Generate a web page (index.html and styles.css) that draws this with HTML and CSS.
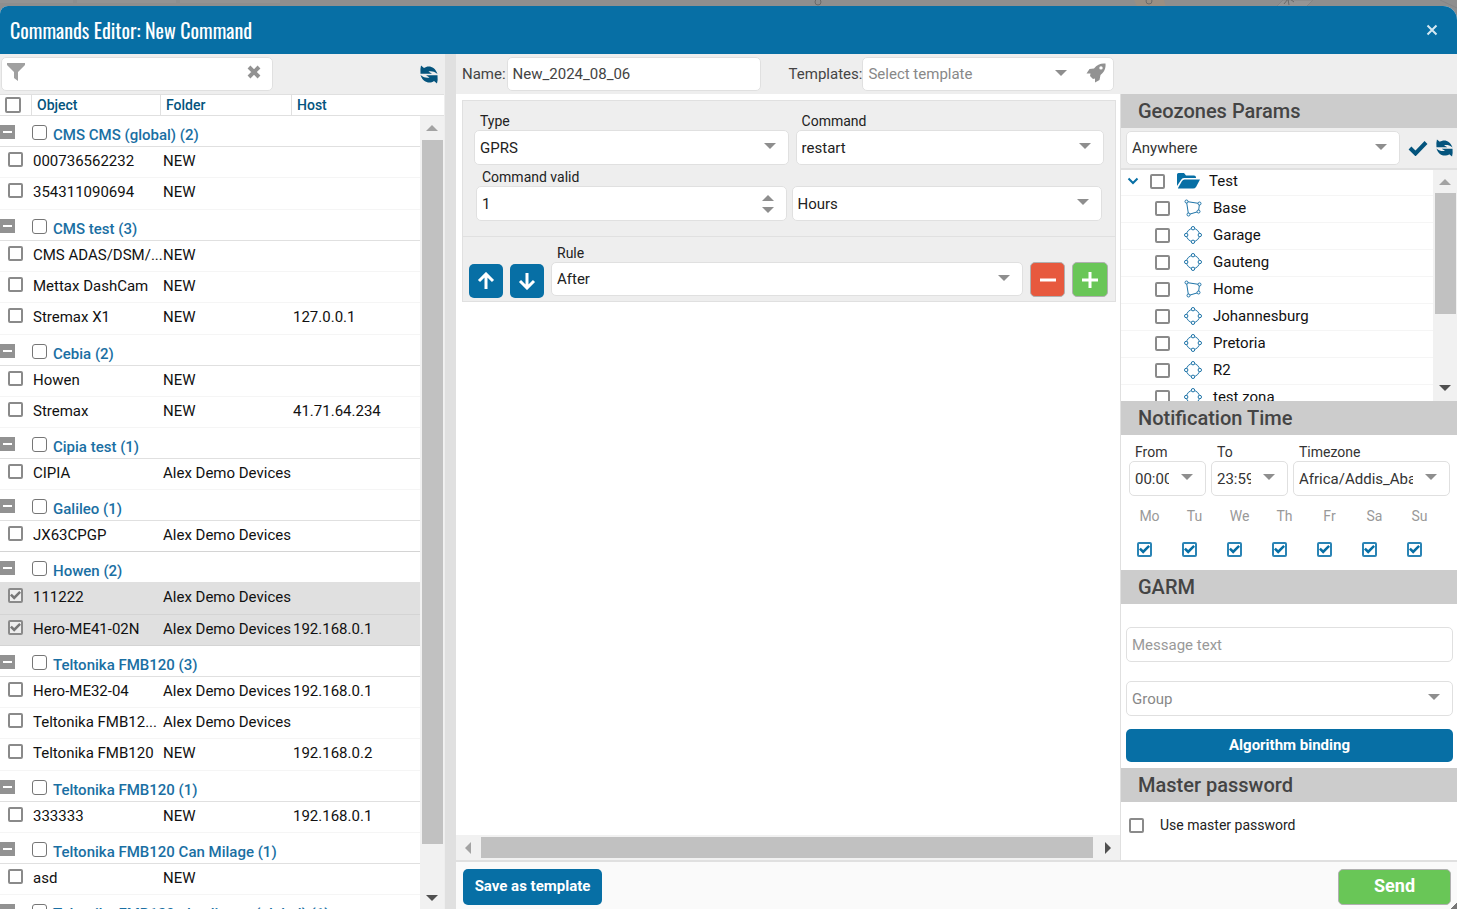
FILE: index.html
```html
<!DOCTYPE html>
<html lang="en">

<head>
    <meta charset="utf-8" />
    <meta name="viewport" content="width=device-width,initial-scale=1.0" />
    <title>Commands Editor</title>
    <link rel="stylesheet" href="styles.css">
</head>

<body>
    <svg class="icon-defs" width="0" height="0" aria-hidden="true">
        <symbol id="refresh" viewBox="0 0 18 19">
            <path d="M1 0.500L4 3C8 0 15 1 17.500 9C14 6 11 6 8.500 6.500L12 8.800H0.500Q0 4 1 .5z" />
            <path d="M17 18.500L14 16C10 19 3 18 .5 10C4 13 7 13 9.500 12.500L6 10.200H17.500Q18 15 17 18.500z" />
        </symbol>
        <symbol id="poly" viewBox="0 0 18 18">
            <path d="M2.500 2.500L15.500 4.500L14.500 12.500L4.500 15.500z" />
            <circle cx="2.500" cy="2.500" r="1.500" />
            <circle cx="15.500" cy="4.500" r="1.500" />
            <circle cx="14.500" cy="12.500" r="1.500" />
            <circle cx="4.500" cy="15.500" r="1.500" />
        </symbol>
        <symbol id="circle" viewBox="0 0 18 18">
            <circle cx="9" cy="9" r="6.500" />
            <circle cx="9" cy="2.200" r="1.700" />
            <circle cx="15.800" cy="9" r="1.700" />
            <circle cx="9" cy="15.800" r="1.700" />
            <circle cx="2.200" cy="9" r="1.700" />
        </symbol>
    </svg>

    <!-- dimmed map behind the window -->
    <svg class="map" width="100%" height="14" aria-hidden="true">
        <path class="tile" d="M0 0h73v3H0zM77 0h99v3H77zM180 0h100v3H180z" />
        <path class="road" d="M1134 0h30l4 14h-28z" />
        <path class="street" d="M1283 0h30l-14 14h-30zM1440 0l17 8" />
        <circle cx="1149" cy="1" r="3" />
        <circle cx="818" cy="2" r="3" />
        <path class="mark" d="M1284 4l4-5 1 6M1290-1l4 3" />
    </svg>

    <div class="window">
        <header class="title-bar">
            <h1>Commands Editor: New Command</h1>
            <button class="close" aria-label="Close">
                <svg width="12" height="12" viewBox="0 0 12 12"><path d="M1.500 1.500l9 9M10.500 1.500l-9 9" /></svg>
            </button>
        </header>

        <div class="content">
            <!-- objects -->
            <section class="objects">
                <div class="toolbar">
                    <div class="field filter">
                        <svg width="18" height="18" viewBox="0 0 18 18"><path d="M0 0h18v2l-7 7v9l-4-3V9L0 2z" /></svg>
                        <input type="text" aria-label="Filter">
                        <button class="clear" aria-label="Clear filter">
                            <svg width="14" height="14" viewBox="0 0 14 14"><path d="M2 2l10 10M12 2L2 12" /></svg>
                        </button>
                    </div>
                    <button class="icon-btn" aria-label="Refresh objects"><svg class="blue" width="18" height="19"><use href="#refresh" /></svg></button>
                </div>
                <div class="grid-head">
                    <span class="c-check"><input type="checkbox" class="check big" aria-label="Select all"></span>
                    <span class="c-object">Object</span>
                    <span class="c-folder">Folder</span>
                    <span class="c-host">Host</span>
                </div>
                <div class="grid-body">
                    <div class="grid-rows">
                        <table>
                            <colgroup>
                                <col class="w-check"><col class="w-object"><col class="w-folder"><col>
                            </colgroup>
                            <tbody>
                                <tr class="group"><th colspan="4"><div><button class="fold" aria-label="Collapse"></button><input type="checkbox" class="check thin" id="g1"><label for="g1">CMS CMS (global) (2)</label></div></th></tr>
                                <tr><td><input type="checkbox" class="check" aria-label="000736562232"></td><td>000736562232</td><td>NEW</td><td></td></tr>
                                <tr><td><input type="checkbox" class="check" aria-label="354311090694"></td><td>354311090694</td><td>NEW</td><td></td></tr>
                            </tbody>
                            <tbody>
                                <tr class="group"><th colspan="4"><div><button class="fold" aria-label="Collapse"></button><input type="checkbox" class="check thin" id="g2"><label for="g2">CMS test (3)</label></div></th></tr>
                                <tr><td><input type="checkbox" class="check" aria-label="CMS ADAS"></td><td>CMS ADAS/DSM/...</td><td>NEW</td><td></td></tr>
                                <tr><td><input type="checkbox" class="check" aria-label="Mettax DashCam"></td><td>Mettax DashCam</td><td>NEW</td><td></td></tr>
                                <tr><td><input type="checkbox" class="check" aria-label="Stremax X1"></td><td>Stremax X1</td><td>NEW</td><td>127.0.0.1</td></tr>
                            </tbody>
                            <tbody>
                                <tr class="group"><th colspan="4"><div><button class="fold" aria-label="Collapse"></button><input type="checkbox" class="check thin" id="g3"><label for="g3">Cebia (2)</label></div></th></tr>
                                <tr><td><input type="checkbox" class="check" aria-label="Howen"></td><td>Howen</td><td>NEW</td><td></td></tr>
                                <tr><td><input type="checkbox" class="check" aria-label="Stremax"></td><td>Stremax</td><td>NEW</td><td>41.71.64.234</td></tr>
                            </tbody>
                            <tbody>
                                <tr class="group"><th colspan="4"><div><button class="fold" aria-label="Collapse"></button><input type="checkbox" class="check thin" id="g4"><label for="g4">Cipia test (1)</label></div></th></tr>
                                <tr><td><input type="checkbox" class="check" aria-label="CIPIA"></td><td>CIPIA</td><td>Alex Demo Devices</td><td></td></tr>
                            </tbody>
                            <tbody>
                                <tr class="group"><th colspan="4"><div><button class="fold" aria-label="Collapse"></button><input type="checkbox" class="check thin" id="g5"><label for="g5">Galileo (1)</label></div></th></tr>
                                <tr class="last"><td><input type="checkbox" class="check" aria-label="JX63CPGP"></td><td>JX63CPGP</td><td>Alex Demo Devices</td><td></td></tr>
                            </tbody>
                            <tbody>
                                <tr class="group"><th colspan="4"><div><button class="fold" aria-label="Collapse"></button><input type="checkbox" class="check thin" id="g6"><label for="g6">Howen (2)</label></div></th></tr>
                                <tr class="picked"><td><input type="checkbox" class="check" checked aria-label="111222"></td><td>111222</td><td>Alex Demo Devices</td><td></td></tr>
                                <tr class="picked"><td><input type="checkbox" class="check" checked aria-label="Hero-ME41-02N"></td><td>Hero-ME41-02N</td><td>Alex Demo Devices</td><td>192.168.0.1</td></tr>
                            </tbody>
                            <tbody>
                                <tr class="group"><th colspan="4"><div><button class="fold" aria-label="Collapse"></button><input type="checkbox" class="check thin" id="g7"><label for="g7">Teltonika FMB120 (3)</label></div></th></tr>
                                <tr><td><input type="checkbox" class="check" aria-label="Hero-ME32-04"></td><td>Hero-ME32-04</td><td>Alex Demo Devices</td><td>192.168.0.1</td></tr>
                                <tr><td><input type="checkbox" class="check" aria-label="Teltonika FMB12"></td><td>Teltonika FMB12...</td><td>Alex Demo Devices</td><td></td></tr>
                                <tr><td><input type="checkbox" class="check" aria-label="Teltonika FMB120"></td><td>Teltonika FMB120</td><td>NEW</td><td>192.168.0.2</td></tr>
                            </tbody>
                            <tbody>
                                <tr class="group"><th colspan="4"><div><button class="fold" aria-label="Collapse"></button><input type="checkbox" class="check thin" id="g8"><label for="g8">Teltonika FMB120 (1)</label></div></th></tr>
                                <tr><td><input type="checkbox" class="check" aria-label="333333"></td><td>333333</td><td>NEW</td><td>192.168.0.1</td></tr>
                            </tbody>
                            <tbody>
                                <tr class="group"><th colspan="4"><div><button class="fold" aria-label="Collapse"></button><input type="checkbox" class="check thin" id="g9"><label for="g9">Teltonika FMB120 Can Milage (1)</label></div></th></tr>
                                <tr><td><input type="checkbox" class="check" aria-label="asd"></td><td>asd</td><td>NEW</td><td></td></tr>
                            </tbody>
                            <tbody>
                                <tr class="group"><th colspan="4"><div><button class="fold" aria-label="Collapse"></button><input type="checkbox" class="check thin" id="g10"><label for="g10">Teltonika FMB120 plus liquna (global) (1)</label></div></th></tr>
                            </tbody>
                        </table>
                    </div>
                    <div class="scroll-v"><i class="up"></i><b class="thumb"></b><i class="down"></i></div>
                </div>
            </section>

            <div class="splitter"></div>

            <!-- command -->
            <main class="editor">
                <div class="toolbar">
                    <label for="name">Name:</label>
                    <input class="field name" type="text" id="name" value="New_2024_08_06">
                    <label class="templates-label" for="template">Templates:</label>
                    <div class="field templates">
                        <span class="select grey"><select id="template"><option>Select template</option></select></span>
                        <button class="rocket" aria-label="Apply template">
                            <svg width="20" height="20" viewBox="0 0 20 20"><path fill-rule="evenodd" d="M19.500 0.500C15 0 11 1.500 8 5.500L3.500 6 0.500 10.500H4.500L4 13 7 16 9 15.500v4l4.500-2.500L14.500 12C18.500 9 20 5 19.500.5zM15 3.200a1.700 1.700 0 110 3.400 1.700 1.700 0 010-3.400z" /></svg>
                        </button>
                    </div>
                </div>

                <div class="panes">
                    <div class="command">
                        <div class="canvas">
                            <div class="card">
                                <div class="row">
                                    <div class="labelled type"><label for="type">Type</label><span class="select field"><select id="type"><option>GPRS</option></select></span></div>
                                    <div class="labelled"><label for="command">Command</label><span class="select field"><select id="command"><option>restart</option></select></span></div>
                                </div>
                                <div class="row valid">
                                    <div class="labelled"><label for="valid">Command valid</label><span class="spin field"><input type="number" id="valid" value="1"></span></div>
                                    <div class="labelled"><span class="select field"><select aria-label="Unit"><option>Hours</option></select></span></div>
                                </div>
                                <div class="rule">
                                    <button class="square" aria-label="Move up"><svg width="18" height="18" viewBox="0 0 18 18"><path d="M9 17V3M2 9l7-7 7 7" /></svg></button>
                                    <button class="square" aria-label="Move down"><svg width="18" height="18" viewBox="0 0 18 18"><path d="M9 1v14M2 9l7 7 7-7" /></svg></button>
                                    <div class="labelled"><label for="rule">Rule</label><span class="select field"><select id="rule"><option>After</option></select></span></div>
                                    <button class="square red" aria-label="Remove rule"><svg width="18" height="18" viewBox="0 0 18 18"><path d="M1 9h16" /></svg></button>
                                    <button class="square green" aria-label="Add rule"><svg width="18" height="18" viewBox="0 0 18 18"><path d="M1 9h16M9 1v16" /></svg></button>
                                </div>
                            </div>
                        </div>
                        <div class="scroll-h"><i class="left"></i><b class="thumb"></b><i class="right"></i></div>
                    </div>

                    <aside class="params">
                        <h2>Geozones Params</h2>
                        <div class="zone-bar">
                            <span class="select field"><select aria-label="Zone"><option>Anywhere</option></select></span>
                            <button class="icon-btn" aria-label="Apply"><svg class="tick" width="20" height="16" viewBox="0 0 20 16"><path d="M2 8l5.500 5.500L18 2.500" /></svg></button>
                            <button class="icon-btn" aria-label="Refresh zones"><svg class="blue" width="17" height="18"><use href="#refresh" /></svg></button>
                        </div>
                        <div class="tree">
                            <ul>
                                <li class="root"><svg class="chevron" width="12" height="8" viewBox="0 0 12 8"><path d="M1.500 1.500L6 6l4.500-4.500" /></svg><input type="checkbox" class="check" id="z0"><svg class="folder" width="23" height="16" viewBox="0 0 23 16"><path d="M0 13V1.500Q0 0 1.500 0H7l2 2.500h8Q19 2.500 19 4.500V5H7Q5 5 4 7z" /><path d="M1 15L5 8Q6 6.500 7.500 6.500H23L19 14q-1 1.500-3 1.500H1z" /></svg><label for="z0">Test</label></li>
                                <li><input type="checkbox" class="check" id="z1"><svg class="zone" width="18" height="18"><use href="#poly" /></svg><label for="z1">Base</label></li>
                                <li><input type="checkbox" class="check" id="z2"><svg class="zone" width="18" height="18"><use href="#circle" /></svg><label for="z2">Garage</label></li>
                                <li><input type="checkbox" class="check" id="z3"><svg class="zone" width="18" height="18"><use href="#circle" /></svg><label for="z3">Gauteng</label></li>
                                <li><input type="checkbox" class="check" id="z4"><svg class="zone" width="18" height="18"><use href="#poly" /></svg><label for="z4">Home</label></li>
                                <li><input type="checkbox" class="check" id="z5"><svg class="zone" width="18" height="18"><use href="#circle" /></svg><label for="z5">Johannesburg</label></li>
                                <li><input type="checkbox" class="check" id="z6"><svg class="zone" width="18" height="18"><use href="#circle" /></svg><label for="z6">Pretoria</label></li>
                                <li><input type="checkbox" class="check" id="z7"><svg class="zone" width="18" height="18"><use href="#circle" /></svg><label for="z7">R2</label></li>
                                <li><input type="checkbox" class="check" id="z8"><svg class="zone" width="18" height="18"><use href="#circle" /></svg><label for="z8">test zona</label></li>
                            </ul>
                            <div class="scroll-v"><i class="up"></i><b class="thumb"></b><i class="down"></i></div>
                        </div>

                        <h2>Notification Time</h2>
                        <div class="time">
                            <div class="labelled short"><label for="from">From</label><span class="select field"><select id="from"><option>00:00</option></select></span></div>
                            <div class="labelled short"><label for="to">To</label><span class="select field"><select id="to"><option>23:59</option></select></span></div>
                            <div class="labelled"><label for="zone">Timezone</label><span class="select field"><select id="zone"><option>Africa/Addis_Ababa</option></select></span></div>
                        </div>
                        <div class="days">
                            <label>Mo<input type="checkbox" class="check on" checked></label>
                            <label>Tu<input type="checkbox" class="check on" checked></label>
                            <label>We<input type="checkbox" class="check on" checked></label>
                            <label>Th<input type="checkbox" class="check on" checked></label>
                            <label>Fr<input type="checkbox" class="check on" checked></label>
                            <label>Sa<input type="checkbox" class="check on" checked></label>
                            <label>Su<input type="checkbox" class="check on" checked></label>
                        </div>

                        <h2>GARM</h2>
                        <div class="garm">
                            <input class="field" type="text" placeholder="Message text" aria-label="Message text">
                            <span class="select field grey"><select aria-label="Group"><option>Group</option></select></span>
                            <button class="primary">Algorithm binding</button>
                        </div>

                        <h2>Master password</h2>
                        <div class="master">
                            <input type="checkbox" class="check" id="master"><label for="master">Use master password</label>
                        </div>
                    </aside>
                </div>

                <footer class="actions">
                    <button class="primary save">Save as template</button>
                    <button class="send">Send</button>
                </footer>
            </main>
        </div>
        <span class="resize"></span>
    </div>
</body>

</html>
```

FILE: styles.css
```css
* {
    box-sizing: border-box;
}

html,
body {
    height: 100%;
}

body {
    margin: 0;
    padding-top: 6px;
    background-color: #8e8e8e;
    font: 15px/20px Roboto, "Liberation Sans", sans-serif;
    color: #222;
    overflow: hidden;
}

button,
input,
select {
    font: inherit;
    color: inherit;
    margin: 0;
}

button {
    border: 0;
    padding: 0;
    background: none;
    cursor: pointer;
}

svg {
    display: block;
    flex: none;
}

.icon-defs {
    position: absolute;
}

.map {
    position: absolute;
    top: 0;
    left: 0;
}

.map .tile {
    fill: #939393;
}

.map .road {
    fill: #9a8f83;
}

.map .street {
    fill: #959595;
    stroke: #858585;
}

.map circle,
.map .mark {
    fill: none;
    stroke: #6a6a6a;
}

.window {
    height: 100%;
    display: flex;
    flex-direction: column;
    position: relative;
    background-color: #fff;
    border-radius: 8px 14px 0 0;
    overflow: hidden;
}

.title-bar {
    height: 48px;
    flex: none;
    display: flex;
    align-items: center;
    justify-content: space-between;
    padding: 0 19px 0 10px;
    background-color: #076fa5;
    color: #fff;
}

h1 {
    margin: 0;
    font: 400 20px/28px Oswald, "Roboto Condensed", "Liberation Sans Narrow", Roboto, sans-serif;
}

.close path {
    stroke: #d5e8f2;
    stroke-width: 2;
}

.content {
    flex: 1;
    min-height: 0;
    display: flex;
}

/* shared controls */
.toolbar {
    height: 40px;
    flex: none;
    display: flex;
    align-items: center;
    background-color: #eee;
    color: #444;
}

.field {
    height: 34px;
    border: 1px solid #e0e0e0;
    border-radius: 5px;
    background-color: #fff;
}

input.field {
    padding: 0 5px;
    outline: 0;
}

.select {
    display: block;
    position: relative;
    min-width: 0;
}

.select select {
    display: block;
    width: 100%;
    height: 100%;
    padding: 0 36px 0 5px;
    border: 0;
    background: none;
    appearance: none;
    text-overflow: clip;
    outline: 0;
}

.select::after {
    content: "";
    position: absolute;
    right: 12px;
    top: 12px;
    border: solid transparent;
    border-width: 6px 6px 0;
    border-top-color: #8e8e8e;
    pointer-events: none;
}

.grey select {
    color: #888;
}

::placeholder {
    color: #999;
    opacity: 1;
}

.check {
    appearance: none;
    flex: none;
    display: block;
    width: 15px;
    height: 15px;
    border: 2px solid #8a8a8a;
    border-radius: 2px;
    background-color: #fff;
}

.check.thin {
    border: 1px solid #767676;
    border-radius: 3px;
}

.check.big {
    width: 16px;
    height: 16px;
}

.check:checked::before {
    content: "";
    display: block;
    width: 11px;
    height: 11px;
    background-color: #777;
    clip-path: polygon(0 50%, 16% 34%, 38% 54%, 84% 8%, 100% 24%, 38% 88%);
}

.check.on {
    border-color: #2a84b5;
}

.check.on:checked::before {
    background-color: #076fa5;
}

.primary {
    border-radius: 5px;
    background-color: #076fa5;
    color: #fff;
    font-weight: 700;
}

.blue {
    fill: #04547d;
}

/* object list */
.objects {
    width: 445px;
    flex: none;
    display: flex;
    flex-direction: column;
    border-right: 1px solid #eee;
}

.objects .toolbar {
    justify-content: space-between;
    padding: 0 6px 0 1px;
}

.filter {
    width: 272px;
    display: flex;
    align-items: center;
    padding: 0 11px 4px 5px;
}

.filter svg {
    fill: #a0a0a0;
}

.filter input {
    flex: 1;
    min-width: 0;
    border: 0;
    outline: 0;
}

.clear path {
    stroke: #929292;
    stroke-width: 4;
}

.grid-head {
    height: 22px;
    flex: none;
    display: flex;
    border: solid #e0e0e0;
    border-width: 1px 0;
    font-size: 14px;
    font-weight: 500;
    color: #04547d;
}

.grid-head span {
    padding-left: 5px;
    border-left: 1px solid #e0e0e0;
}

.grid-head .c-check {
    width: 31px;
    padding-top: 2px;
    border: 0;
}

.c-object {
    width: 129px;
}

.c-folder {
    width: 131px;
}

.c-host {
    flex: 1;
}

.grid-body {
    flex: 1;
    min-height: 0;
    display: flex;
}

.grid-rows {
    flex: 1;
    overflow: hidden;
}

table {
    width: 100%;
    table-layout: fixed;
    border-collapse: separate;
    border-spacing: 0;
}

.w-check {
    width: 31px;
}

.w-object {
    width: 129px;
}

.w-folder {
    width: 131px;
}

td,
th {
    height: 31px;
    padding: 4px 0 0 2px;
    border-bottom: 1px solid #f5f5f5;
    vertical-align: top;
    white-space: nowrap;
    text-align: left;
    color: #111;
}

td:first-child {
    padding: 5px 0 0 8px;
}

td:nth-child(3) {
    padding-left: 3px;
}

tr:nth-child(4) td,
tbody:first-of-type tr:last-child td,
.group + .picked td {
    height: 32px;
}

.group th {
    padding: 9px 0 0;
    border-color: #e0e0e0;
    font-weight: 500;
    color: #1a6fa3;
}

.group div {
    display: flex;
}

.group label {
    padding-left: 6px;
}

.fold {
    width: 15px;
    height: 14px;
    margin-right: 17px;
    padding: 0 3px;
    background-color: #929292;
}

.fold::before {
    content: "";
    display: block;
    height: 2px;
    background-color: #fff;
}

.last td,
.picked td {
    border-color: #d4d4d4;
}

.picked {
    background-color: #e0e0e0;
}

.picked .check {
    background-color: #eee;
}

/* scroll bars */
.scroll-v,
.scroll-h {
    flex: none;
    display: flex;
    align-items: center;
    background-color: #f1f1f1;
}

.scroll-v {
    width: 24px;
    flex-direction: column;
}

.scroll-v i,
.scroll-h i {
    flex: none;
    border: 6px solid transparent;
}

.scroll-v .up {
    margin: 9px 0;
    border-width: 0 6px 6px;
    border-bottom-color: #a3a3a3;
}

.scroll-v .down {
    margin: 51px 0 8px;
    border-width: 6px 6px 0;
    border-top-color: #505050;
}

.thumb {
    background-color: #c1c1c1;
}

.scroll-v .thumb {
    width: 21px;
    flex: 1;
}

.tree .scroll-v .thumb {
    flex: 0 0 121px;
}

.tree .scroll-v .up {
    margin-bottom: 8px;
}

.tree .scroll-v .down {
    margin-top: auto;
    margin-bottom: 10px;
}

.scroll-h {
    height: 25px;
}

.scroll-h .left {
    margin: 0 10px 0 9px;
    border-width: 6px 6px 6px 0;
    border-right-color: #a3a3a3;
}

.scroll-h .right {
    margin: 0 9px 0 12px;
    border-width: 6px 0 6px 6px;
    border-left-color: #505050;
}

.scroll-h .thumb {
    flex: 1;
    height: 21px;
}

.splitter {
    width: 11px;
    flex: none;
    background-color: #e0e0e0;
}

/* editor */
.editor {
    flex: 1;
    min-width: 0;
    display: flex;
    flex-direction: column;
}

.editor > .toolbar {
    padding-left: 6px;
}

.name {
    width: 254px;
    margin-left: 1px;
}

.templates-label {
    margin-left: 28px;
}

.templates {
    width: 252px;
    display: flex;
    align-items: center;
}

.templates .select {
    flex: 1;
    height: 100%;
}

.templates .select::after {
    right: 19px;
}

.rocket {
    margin: 0 7px 2px 0;
}

.rocket path {
    fill: #929292;
}

.panes {
    flex: 1;
    min-height: 0;
    display: flex;
}

.command {
    flex: 1;
    min-width: 0;
    display: flex;
    flex-direction: column;
}

.canvas {
    flex: 1;
    padding: 6px 4px 6px 6px;
}

.card {
    border: 1px solid #e0e0e0;
    background-color: #eee;
}

.row {
    display: flex;
    gap: 7px;
    padding: 12px 11px 0;
}

.row .type {
    flex-grow: 1.02;
}

.row.valid {
    gap: 5px;
    padding: 4px 13px 15px;
    border-bottom: 1px solid #e0e0e0;
}

.labelled {
    flex: 1;
    min-width: 0;
    display: flex;
    flex-direction: column;
    justify-content: flex-end;
    font-size: 14px;
}

.labelled label {
    line-height: 17px;
    padding-left: 6px;
}

.labelled .field {
    height: 35px;
    font-size: 15px;
}

.spin {
    display: block;
    position: relative;
}

.spin input {
    display: block;
    width: 100%;
    height: 100%;
    padding: 0 36px 0 5px;
    border: 0;
    background: none;
    appearance: textfield;
    outline: 0;
}

.spin::before,
.spin::after {
    content: "";
    position: absolute;
    right: 12px;
    border: solid transparent;
}

.spin::before {
    top: 8px;
    border-width: 0 6px 6px;
    border-bottom-color: #8e8e8e;
}

.spin::after {
    top: 20px;
    border-width: 6px 6px 0;
    border-top-color: #8e8e8e;
}

.rule {
    display: flex;
    align-items: flex-end;
    gap: 7px;
    padding: 8px 7px 3px 6px;
}

.rule .labelled {
    padding-bottom: 2px;
}

.rule .labelled .field {
    height: 34px;
}

.square {
    width: 34px;
    height: 34px;
    display: flex;
    align-items: center;
    justify-content: center;
    border-radius: 5px;
    background-color: #076fa5;
}

.square path {
    fill: none;
    stroke: #fff;
    stroke-width: 3;
}

.square.red,
.square.green {
    width: 35px;
    height: 35px;
    margin-bottom: 1px;
    border: 1px solid #b0b0b0;
}

.square.red {
    background-color: #e7593e;
}

.square.green {
    width: 36px;
    background-color: #69c657;
}

/* right column */
.params {
    width: 337px;
    flex: none;
    border-left: 1px solid #e0e0e0;
    overflow: hidden;
}

h2 {
    height: 34px;
    margin: 0;
    padding-left: 17px;
    background-color: #ccc;
    font: 500 20px/34px Roboto, "Liberation Sans", sans-serif;
    color: #444;
}

.zone-bar {
    height: 42px;
    display: flex;
    align-items: center;
    padding: 0 4px 0 5px;
    border-bottom: 2px solid #e0e0e0;
    background-color: #eee;
    color: #333;
}

.zone-bar .select {
    flex: 1;
}

.zone-bar .icon-btn {
    margin-left: 8px;
}

.tick path {
    fill: none;
    stroke: #04547d;
    stroke-width: 4;
}

.tree {
    height: 231px;
    display: flex;
    overflow: hidden;
}

.tree ul {
    flex: 1;
    margin: 0;
    padding: 0;
    list-style: none;
}

.tree li {
    height: 27px;
    display: flex;
    align-items: center;
    padding: 0 0 2px 34px;
    border-bottom: 1px solid #f5f5f5;
    color: #111;
}

.tree li.root {
    height: 26px;
    padding: 0 0 3px 6px;
}

.chevron {
    margin-right: 11px;
}

.chevron path {
    fill: none;
    stroke: #076fa5;
    stroke-width: 2;
}

.folder {
    margin: 0 9px 0 12px;
    fill: #076fa5;
}

.zone {
    margin: 0 11px 0 14px;
    fill: #fff;
    stroke: #1f74a8;
    stroke-width: 1;
}

.time {
    display: flex;
    gap: 5px;
    padding: 9px 7px 0 8px;
    color: #333;
}

.time .short {
    flex: 0 0 77px;
}

.days {
    display: flex;
    padding: 11px 0 13px 7px;
}

.days label {
    width: 45px;
    height: 50px;
    display: flex;
    flex-direction: column;
    justify-content: space-between;
    padding-right: 2px;
    text-align: center;
    font-size: 14px;
    line-height: 19px;
    color: #999;
}

.days .check {
    margin-left: 9px;
}

.garm {
    display: flex;
    flex-direction: column;
    padding: 23px 4px 6px 5px;
}

.garm .field {
    height: 35px;
    margin-bottom: 19px;
}

.garm .select {
    margin-bottom: 13px;
}

.garm .primary {
    height: 33px;
    padding-bottom: 2px;
}

.master {
    display: flex;
    align-items: center;
    gap: 16px;
    padding: 13px 8px;
    font-size: 14px;
}

.actions {
    height: 49px;
    flex: none;
    display: flex;
    align-items: center;
    justify-content: space-between;
    padding: 3px 6px 0 7px;
    border-top: 2px solid #e0e0e0;
    background-color: #fafafa;
}

.save {
    width: 139px;
    height: 36px;
    padding-bottom: 2px;
}

.send {
    width: 113px;
    height: 36px;
    padding-bottom: 2px;
    border: 1px solid #b0b0b0;
    border-radius: 5px;
    background-color: #69c657;
    color: #fff;
    font-size: 18px;
    font-weight: 700;
}

.resize {
    position: absolute;
    right: 0;
    bottom: 0;
    width: 6px;
    height: 6px;
    background: linear-gradient(135deg, transparent 50%, #777 50%);
}
```
